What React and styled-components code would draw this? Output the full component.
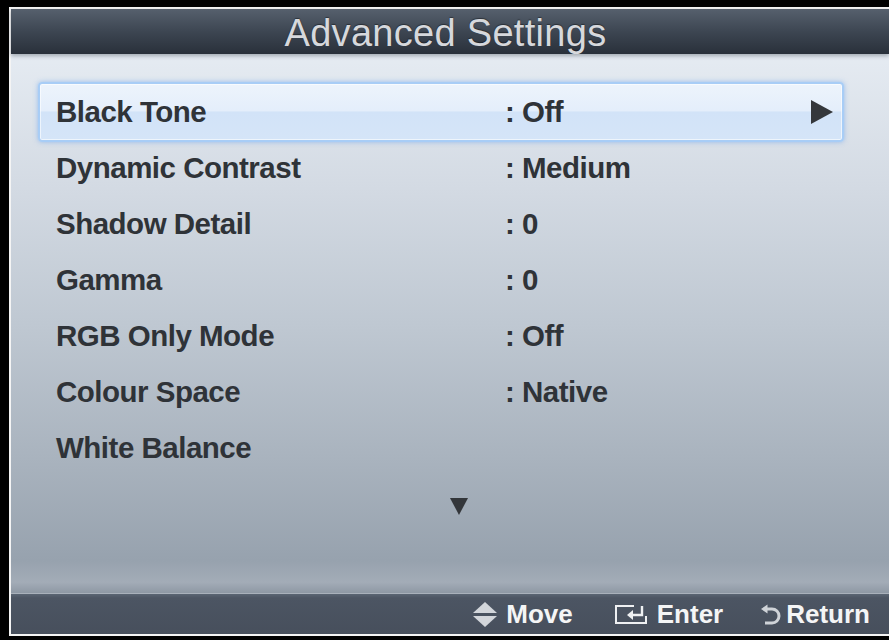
import React from 'react';
import styled, { createGlobalStyle } from 'styled-components';

const GlobalStyle = createGlobalStyle`
  html, body {
    margin: 0;
    padding: 0;
    background: #000;
  }
  body {
    font-family: "Liberation Sans", Arial, sans-serif;
  }
`;

const Frame = styled.div`
  width: 889px;
  height: 640px;
  box-sizing: border-box;
  padding: 7px 0 4px 9px;
  background: #000;
  overflow: hidden;
`;

const Screen = styled.div`
  height: 100%;
  box-sizing: border-box;
  border-top: 2px solid #f4f4f4;
  border-left: 2px solid #f4f4f4;
  border-bottom: 2px solid #f4f4f4;
  display: flex;
  flex-direction: column;
`;

const Header = styled.div`
  height: 45px;
  flex: none;
  display: flex;
  align-items: center;
  justify-content: center;
  background: linear-gradient(to bottom, #56606d 0%, #3d4652 50%, #29303a 100%);
  position: relative;
  z-index: 1;
  box-shadow: 0 2px 4px rgba(40, 50, 60, 0.35);
`;

const Title = styled.h1`
  margin: 0;
  font-family: "Liberation Sans", Arial, sans-serif;
  font-weight: 400;
  font-size: 38px;
  letter-spacing: 0.3px;
  color: #d6d8dc;
  line-height: 1;
  padding: 2px 9px 0 0;
  text-shadow: 0 -1px 1px rgba(0, 0, 0, 0.4);
`;

const Body = styled.div`
  flex: 1;
  display: flex;
  flex-direction: column;
  padding: 30px 0 0 27px;
  background: linear-gradient(
    to bottom,
    #e5ebf2 0%,
    #d3dae3 25%,
    #bfc8d2 50%,
    #a9b3be 75%,
    #97a2ae 94%,
    #a3acb7 98%,
    #8e98a4 100%
  );
`;

const List = styled.div`
  width: 806px;
  display: flex;
  flex-direction: column;
`;

const Row = styled.div`
  height: 56px;
  box-sizing: border-box;
  display: flex;
  align-items: center;
  padding: 0 9px 0 18px;
  color: #2f3338;
  font-family: "Liberation Sans", Arial, sans-serif;
  font-weight: 700;
  font-size: 29.5px;
  letter-spacing: -0.5px;

  &[data-selected='true'] {
    height: 60px;
    margin: -2px 0;
    padding-left: 16px;
    border: 2px solid #a8cdf6;
    border-radius: 4px;
    background: linear-gradient(to bottom, #edf4fc 0%, #e4eefb 48%, #d2e3f8 50%, #d5e5f8 100%);
    box-shadow: 0 0 5px rgba(120, 170, 235, 0.7), inset 0 0 0 1px rgba(255, 255, 255, 0.6);
  }
`;

const Label = styled.span`
  width: 449px;
  flex: none;
`;

const Value = styled.span`
  flex: 1;
`;

const MoreArrow = styled.div`
  display: flex;
  justify-content: center;
  padding: 22px 0 0 18px;
  width: 806px;
`;

const Footer = styled.div`
  height: 40px;
  flex: none;
  display: flex;
  align-items: center;
  justify-content: flex-end;
  padding-right: 19px;
  background: linear-gradient(to bottom, #5a6573 0%, #4c5563 10%, #474f5c 100%);
  border-top: 1px solid #a9b1bb;
`;

const Hint = styled.div`
  display: flex;
  align-items: center;
  gap: ${(p) => p.$iconGap}px;
  margin-left: ${(p) => p.$gap}px;
  color: #f4f5f6;
  font-family: "Liberation Sans", Arial, sans-serif;
  font-weight: 700;
  font-size: 26px;
  line-height: 1;
`;

const settings = [
  { label: 'Black Tone', value: ': Off', selected: true },
  { label: 'Dynamic Contrast', value: ': Medium' },
  { label: 'Shadow Detail', value: ': 0' },
  { label: 'Gamma', value: ': 0' },
  { label: 'RGB Only Mode', value: ': Off' },
  { label: 'Colour Space', value: ': Native' },
  { label: 'White Balance', value: '' },
];

const RightArrow = () => (
  <svg width="22" height="24" viewBox="0 0 22 24">
    <path d="M0 0 L22 12 L0 24 Z" fill="#34373b" />
  </svg>
);

const DownArrow = () => (
  <svg width="18" height="17" viewBox="0 0 18 17">
    <path d="M0 0 H18 L9 17 Z" fill="#33363a" />
  </svg>
);

const MoveIcon = () => (
  <svg width="24" height="25" viewBox="0 0 24 25">
    <path d="M12 0 L24 11 H0 Z" fill="#d3d6db" />
    <path d="M0 14 H24 L12 25 Z" fill="#d3d6db" />
  </svg>
);

const EnterIcon = () => (
  <svg width="32" height="19" viewBox="0 0 32 19">
    <path d="M19 1 H1 V18 H31 V11" fill="none" stroke="#eef0f2" strokeWidth="2" />
    <path d="M27 1 V10 H17" fill="none" stroke="#eef0f2" strokeWidth="2.4" />
    <path d="M12 10 L18 5 V15 Z" fill="#eef0f2" />
  </svg>
);

const ReturnIcon = () => (
  <svg width="21" height="21" viewBox="0 0 21 21">
    <path d="M7 5 H12 A7 7 0 0 1 12 19 H5" fill="none" stroke="#cfd3d8" strokeWidth="3" />
    <path d="M1 5 L7.5 0.5 V9.5 Z" fill="#cfd3d8" />
  </svg>
);

export default function App() {
  return (
    <>
      <GlobalStyle />
      <Frame>
        <Screen>
          <Header>
            <Title>Advanced Settings</Title>
          </Header>
          <Body>
            <List>
              {settings.map((item) => (
                <Row key={item.label} data-selected={item.selected ? 'true' : 'false'}>
                  <Label>{item.label}</Label>
                  <Value>{item.value}</Value>
                  {item.selected && <RightArrow />}
                </Row>
              ))}
            </List>
            <MoreArrow>
              <DownArrow />
            </MoreArrow>
          </Body>
          <Footer>
            <Hint $gap={0} $iconGap={9}>
              <MoveIcon />
              Move
            </Hint>
            <Hint $gap={42} $iconGap={10}>
              <EnterIcon />
              Enter
            </Hint>
            <Hint $gap={37} $iconGap={5}>
              <ReturnIcon />
              Return
            </Hint>
          </Footer>
        </Screen>
      </Frame>
    </>
  );
}
